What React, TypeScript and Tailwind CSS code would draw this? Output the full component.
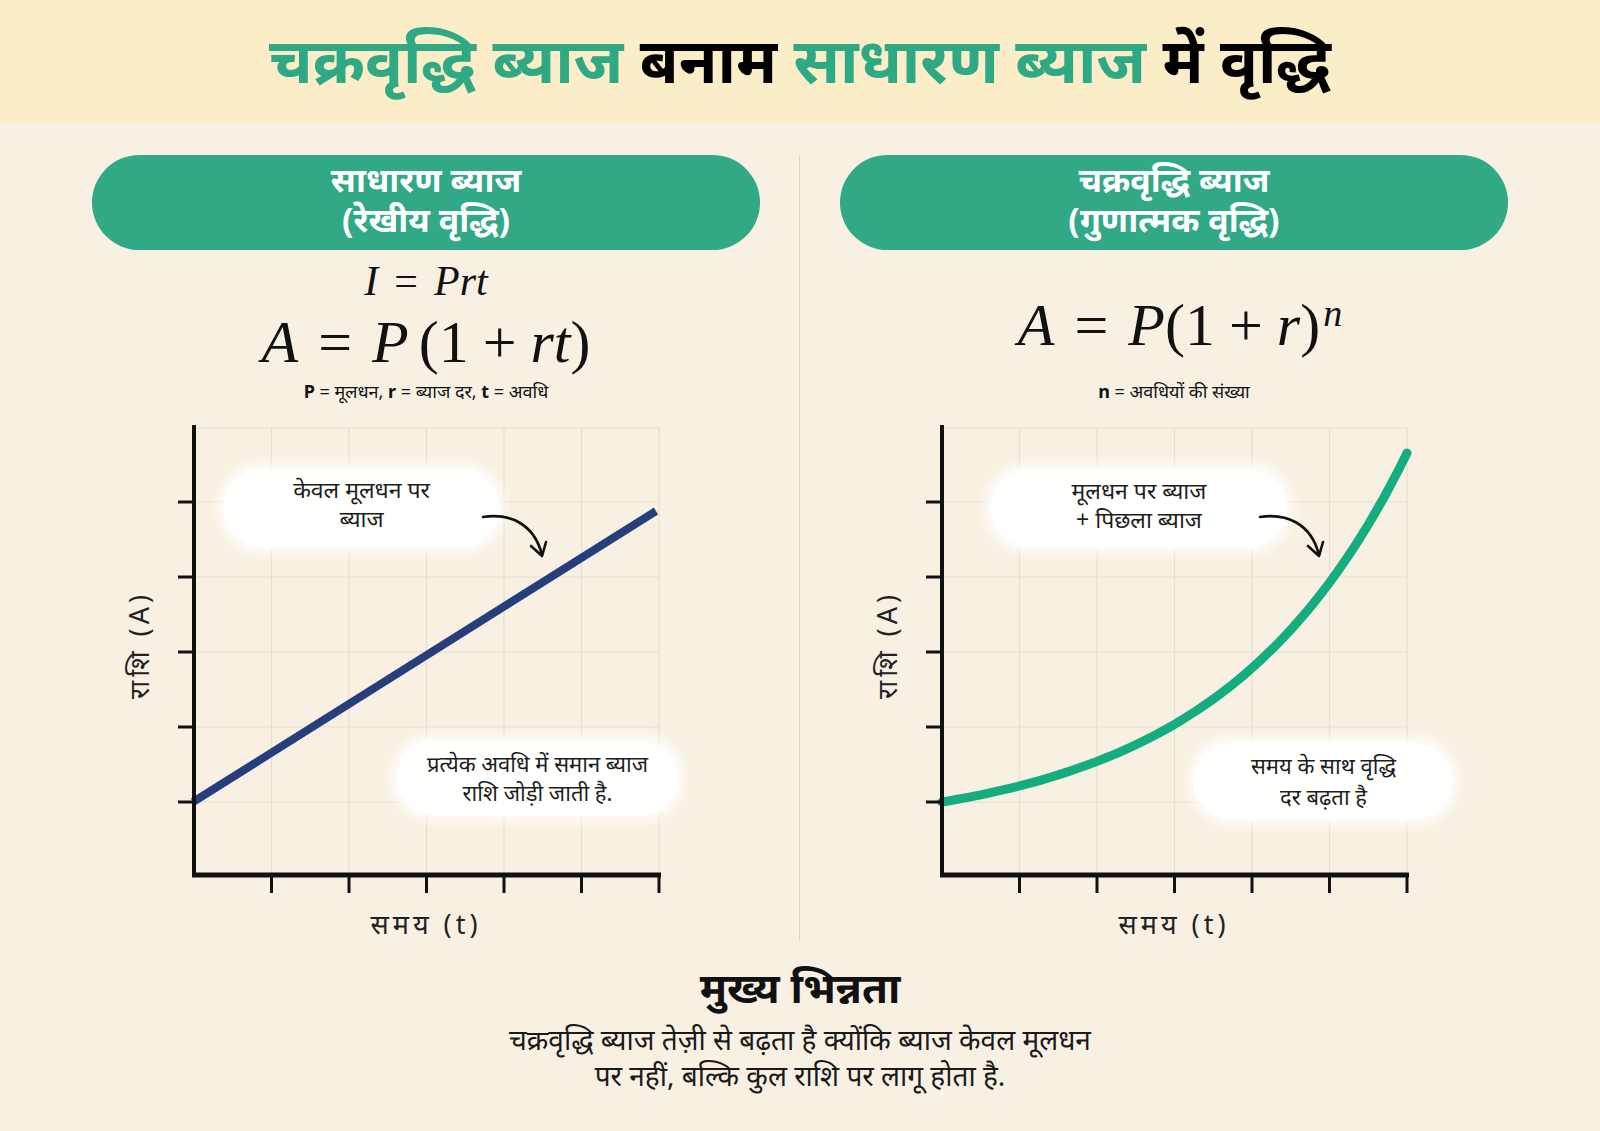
import React from "react"

const xTicks = [0, 1, 2, 3, 4, 5, 6].map((i) => 22 + i * 77.5)
const yTicks = [23, 97, 172, 247, 322, 397]

function curvePath() {
  const pts: string[] = []
  const k = 2.5
  for (let i = 0; i <= 60; i++) {
    const t = i / 60
    const x = 22 + t * 465
    const y = 397 - (349 * (Math.exp(k * t) - 1)) / (Math.exp(k) - 1)
    pts.push(`${i === 0 ? "M" : "L"}${x.toFixed(1)} ${y.toFixed(1)}`)
  }
  return pts.join(" ")
}

function Grid() {
  return (
    <g>
      {xTicks.slice(1).map((x) => (
        <line key={"v" + x} x1={x} y1={23} x2={x} y2={470} stroke="#e6dfcf" strokeWidth={1.2} />
      ))}
      {yTicks.map((y) => (
        <line key={"h" + y} x1={22} y1={y} x2={487} y2={y} stroke="#e6dfcf" strokeWidth={1.2} />
      ))}
    </g>
  )
}

function Axes() {
  return (
    <g stroke="#111" strokeLinecap="butt">
      <line x1={22} y1={20} x2={22} y2={472} strokeWidth={4} />
      <line x1={20} y1={470} x2={489} y2={470} strokeWidth={5} />
      {xTicks.slice(1).map((x) => (
        <line key={"xt" + x} x1={x} y1={470} x2={x} y2={488} strokeWidth={3} />
      ))}
      {yTicks.slice(1).map((y) => (
        <line key={"yt" + y} x1={6} y1={y} x2={22} y2={y} strokeWidth={3} />
      ))}
    </g>
  )
}

function Bubble({ className, lines }: { className: string; lines: string[] }) {
  return (
    <div
      className={`absolute flex flex-col items-center justify-center rounded-full bg-white/95 text-[#1d1d1d] shadow-[0_0_10px_6px_rgba(255,255,255,0.75)] ${className}`}
    >
      {lines.map((l) => (
        <span key={l}>{l}</span>
      ))}
    </div>
  )
}

function Arrow({ left }: { left: number }) {
  return (
    <svg
      className="absolute top-[100px] pointer-events-none"
      style={{ left }}
      width="80"
      height="60"
      viewBox="0 0 80 60"
      fill="none"
      stroke="#111"
      strokeWidth={2.6}
      strokeLinecap="round"
      strokeLinejoin="round"
    >
      <path d="M4 12 C 30 8, 55 18, 63 50" />
      <path d="M52 41 L63 51 L67 37" />
    </svg>
  )
}

function Chart({ kind }: { kind: "linear" | "compound" }) {
  return (
    <div className="relative w-full">
      <div className="flex">
        <div className="flex w-[80px] h-[492px] items-center pb-[12px]">
          <span className="ml-[31px] rotate-180 [writing-mode:vertical-rl] text-[27px] leading-[32px] tracking-[4px] text-[#222]">
            राशि (A)
          </span>
        </div>
        <svg width="500" height="492" viewBox="0 0 500 492">
          <Grid />
          {kind === "linear" ? (
            <line x1={21} y1={397} x2={484} y2={106} stroke="#263f7c" strokeWidth={8} />
          ) : (
            <path d={curvePath()} stroke="#14ad80" strokeWidth={9} fill="none" strokeLinecap="round" />
          )}
          <Axes />
        </svg>
      </div>
      <div className="mt-[11px] w-[580px] pl-[101px] pr-[13px] text-center text-[27px] leading-[32px] tracking-[4px] text-[#222]">
        समय (t)
      </div>
      {kind === "linear" ? (
        <>
          <Bubble
            className="left-[131px] top-[63px] w-[277px] h-[80px] pb-[8px] text-[23px] leading-[29px]"
            lines={["केवल मूलधन पर", "ब्याज"]}
          />
          <Bubble
            className="left-[304px] top-[335px] w-[283px] h-[76px] text-[22px] leading-[29px]"
            lines={["प्रत्येक अवधि में समान ब्याज", "राशि जोड़ी जाती है."]}
          />
          <Arrow left={387} />
        </>
      ) : (
        <>
          <Bubble
            className="left-[150px] top-[63px] w-[298px] h-[80px] pb-[6px] text-[23px] leading-[29px]"
            lines={["मूलधन पर ब्याज", "+ पिछला ब्याज"]}
          />
          <Bubble
            className="left-[354px] top-[337px] w-[259px] h-[78px] text-[22px] leading-[31px]"
            lines={["समय के साथ वृद्धि", "दर बढ़ता है"]}
          />
          <Arrow left={416} />
        </>
      )}
    </div>
  )
}

function Pill({ lines }: { lines: string[] }) {
  return (
    <div className="flex h-[95px] w-full flex-col items-center justify-center rounded-full bg-[#31a986] pb-[8px] text-[34px] font-bold leading-[40px] text-white">
      {lines.map((l) => (
        <span key={l}>{l}</span>
      ))}
    </div>
  )
}

const serif = "font-['Liberation_Serif','DejaVu_Serif',serif] text-[#111]"

function Op({ c, w }: { c: string; w: string }) {
  return <span className={w}>{c}</span>
}

export default function App() {
  return (
    <div className="min-h-[1131px] w-[1600px] bg-[#f8f1e3] font-['Noto_Sans','Noto_Sans_Devanagari',sans-serif] text-[#111]">
      <header className="flex h-[122px] items-center justify-center bg-[#fbedc7] pb-[4px]">
        <h1 className="text-[63px] font-bold leading-[74px]">
          <span className="text-[#2fa884]">चक्रवृद्धि ब्याज</span> <span className="text-black">बनाम</span>{" "}
          <span className="text-[#2fa884]">साधारण ब्याज</span> <span className="text-black">में वृद्धि</span>
        </h1>
      </header>

      <main className="flex px-[92px] pt-[33px]">
        <section className="flex w-[668px] flex-col">
          <Pill lines={["साधारण ब्याज", "(रेखीय वृद्धि)"]} />
          <div className="flex h-[155px] flex-col items-center">
            <div className={`${serif} mt-[9px] text-[42px] leading-[44px]`}>
              <i>I</i>
              <Op c="=" w="mx-[16px]" />
              <i>Prt</i>
            </div>
            <div className={`${serif} mt-[9px] text-[60px] leading-[60px]`}>
              <i>A</i>
              <Op c="=" w="mx-[20px]" />
              <i>P</i>
              <span className="ml-[10px]">(1</span>
              <Op c="+" w="mx-[14px]" />
              <i>rt</i>)
            </div>
            <div className="mt-[9px] text-[18px] leading-[20px]">
              <b>P</b> = मूलधन, <b>r</b> = ब्याज दर, <b>t</b> = अवधि
            </div>
          </div>
          <Chart kind="linear" />
        </section>

        <div className="ml-[39px] mr-[40px] w-px bg-[#ddd6c8]" />

        <section className="flex w-[668px] flex-col">
          <Pill lines={["चक्रवृद्धि ब्याज", "(गुणात्मक वृद्धि)"]} />
          <div className="flex h-[155px] flex-col items-center">
            <div className={`${serif} mt-[45px] pl-[12px] text-[60px] leading-[60px]`}>
              <i>A</i>
              <Op c="=" w="mx-[20px]" />
              <i>P</i>(1
              <Op c="+" w="mx-[14px]" />
              <i>r</i>)<sup className="ml-[3px] text-[38px] italic">n</sup>
            </div>
            <div className="mt-[26px] text-[18px] leading-[20px]">
              <b>n</b> = अवधियों की संख्या
            </div>
          </div>
          <Chart kind="compound" />
        </section>
      </main>

      <footer className="flex flex-col items-center pb-[40px]">
        <h2 className="mt-[23px] text-[42px] font-bold leading-[48px]">मुख्य भिन्नता</h2>
        <p className="mt-[10px] text-center text-[28px] leading-[36px] text-[#1a1a1a]">
          चक्रवृद्धि ब्याज तेज़ी से बढ़ता है क्योंकि ब्याज केवल मूलधन
          <br />
          पर नहीं, बल्कि कुल राशि पर लागू होता है.
        </p>
      </footer>
    </div>
  )
}
